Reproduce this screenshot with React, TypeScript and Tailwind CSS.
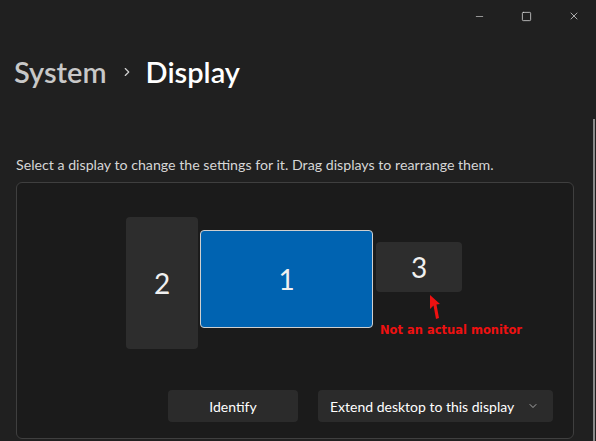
import { ChevronDown, ChevronRight, Minus, Square, X } from "lucide-react";

const FONT = "font-['Segoe_UI',Lato,'Noto_Sans',sans-serif]";

function Monitor({ n, className }: { n: string; className: string }) {
  return (
    <div className={`flex items-center justify-center rounded-[4px] text-[28px] font-normal leading-none text-[#f0f0f0] ${className}`}>
      {n}
    </div>
  );
}

export default function App() {
  return (
    <div className={`relative h-[441px] w-[596px] overflow-hidden bg-[#202020] text-white ${FONT}`}>
      {/* caption buttons */}
      <div className="flex h-[32px] items-center justify-end gap-[36px] pr-[16px]">
        <Minus className="h-[11px] w-[11px] text-[#e6e6e6]" strokeWidth={1.3} />
        <Square className="h-[11px] w-[11px] text-[#e6e6e6]" strokeWidth={1.6} />
        <X className="h-[12px] w-[12px] text-[#e6e6e6]" strokeWidth={1.4} />
      </div>

      {/* breadcrumb */}
      <div className="mt-[22px] flex h-[36px] items-center pl-[14px] text-[29px] font-semibold leading-[36px]">
        <span className="text-[#c8c8c8]">System</span>
        <ChevronRight className="ml-[13px] mr-[12px] h-[14px] w-[14px] text-[#d0d0d0]" strokeWidth={2} />
        <span className="text-white">Display</span>
      </div>

      <p className="mt-[65px] pl-[16px] text-[14.2px] leading-[20px] text-[#d6d6d6]">
        Select a display to change the settings for it. Drag displays to rearrange them.
      </p>

      {/* arrangement panel */}
      <div className="relative ml-[16px] mt-[7px] flex h-[257px] w-[558px] flex-col rounded-[6px] border border-[#3f3f3f] bg-[#1b1b1b]">
        <div className="mt-[34px] flex h-[132px] items-start justify-center pr-[2px]">
          <Monitor n="2" className="h-[132px] w-[72px] bg-[#2d2d2d]" />
          <Monitor n="1" className="ml-[2px] mt-[13px] h-[98px] w-[173px] border border-[#cfcfcf] bg-[#0063b1]" />
          <Monitor n="3" className="ml-[3px] mt-[25px] h-[50px] w-[86px] bg-[#2d2d2d]" />
        </div>

        {/* annotation */}
        <svg className="absolute left-[409px] top-[110px]" width="16" height="28" viewBox="0 0 16 28">
          <polygon points="4,2 4,16 7.5,12.5 10,26 13,25 10.5,11.5 14,11" fill="#ee1111" />
        </svg>
        <span className="absolute left-[363px] top-[140px] font-['DejaVu_Sans',sans-serif] text-[11.5px] font-bold leading-[14px] text-[#ee1111]">
          Not an actual monitor
        </span>

        <div className="mt-[41px] flex justify-end gap-[20px] pr-[20px]">
          <button className="flex h-[32px] w-[130px] items-center justify-center rounded-[4px] bg-[#2b2b2b] text-[14px] text-white">
            Identify
          </button>
          <button className="flex h-[32px] w-[235px] items-center justify-between rounded-[4px] bg-[#2b2b2b] pl-[12px] pr-[14px] text-[14px] text-white">
            <span>Extend desktop to this display</span>
            <ChevronDown className="h-[12px] w-[12px] text-[#cfcfcf]" strokeWidth={1.5} />
          </button>
        </div>
      </div>

      {/* scrollbar */}
      <div className="absolute right-[1px] top-[119px] h-[322px] w-[2px] bg-[#8a8a8a]" />
    </div>
  );
}
